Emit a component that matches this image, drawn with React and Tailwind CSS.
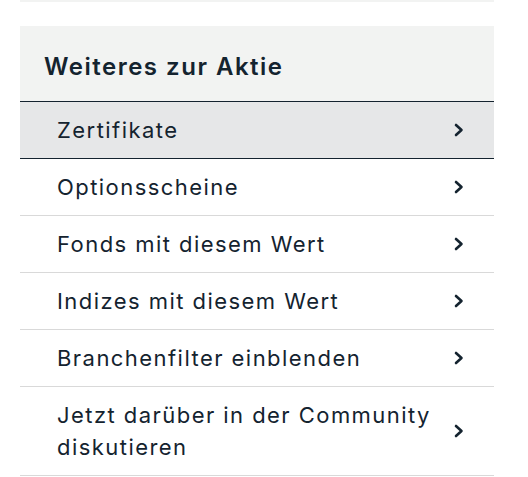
import React from 'react';

const items = [
  'Zertifikate',
  'Optionsscheine',
  'Fonds mit diesem Wert',
  'Indizes mit diesem Wert',
  'Branchenfilter einblenden',
  'Jetzt darüber in der Community diskutieren',
];

function Chevron() {
  return (
    <svg width="12" height="14" viewBox="0 0 12 14" fill="none" className="shrink-0">
      <path d="M3 2l5.5 5L3 12" stroke="#14232f" strokeWidth="2.6" strokeLinecap="round" strokeLinejoin="round" />
    </svg>
  );
}

export default function App() {
  return (
    <div className="w-[528px] h-[477px] bg-white font-['Inter',sans-serif] text-[#14232f]">
      <div className="ml-[20px] w-[474px] h-[2px] bg-[#f2f3f2]" />
      <div className="ml-[20px] w-[474px] mt-[24px]">
        <div className="h-[76px] bg-[#f2f3f2] border-b border-[#14232f] pl-[24px] pt-[6px] flex items-center">
          <h2 className="text-[24px] font-semibold tracking-[1.5px]">Weiteres zur Aktie</h2>
        </div>
        <ul>
          {items.map((label, i) => (
            <li
              key={label}
              className={
                i === 0
                  ? 'h-[57px] bg-[#e6e7e8] border-b border-[#14232f] pl-[37px] pr-[29px] flex items-center justify-between'
                  : i === items.length - 1
                  ? 'h-[89px] border-b border-[#d9d9d9] pl-[37px] pr-[29px] flex items-center justify-between'
                  : 'h-[57px] border-b border-[#d9d9d9] pl-[37px] pr-[29px] flex items-center justify-between'
              }
            >
              <span className="text-[22px] leading-[32px] tracking-[1.45px] max-w-[390px]">{label}</span>
              <Chevron />
            </li>
          ))}
        </ul>
      </div>
    </div>
  );
}
